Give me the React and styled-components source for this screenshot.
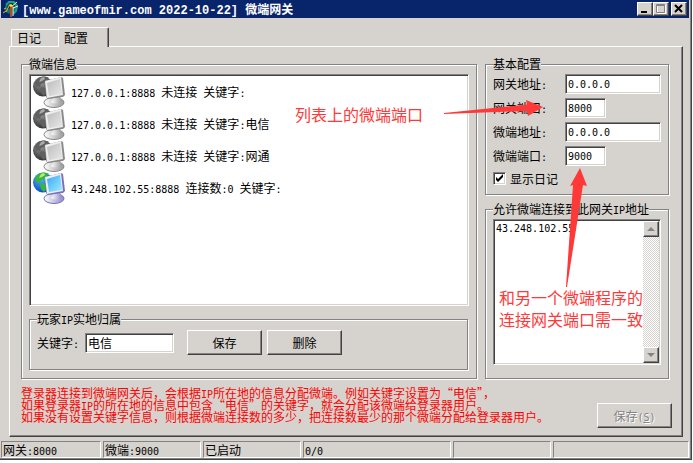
import React, { useState } from 'react'
import styled, { createGlobalStyle, css } from 'styled-components'

const GlobalStyle = createGlobalStyle`
*{
box-sizing:border-box;
}
body{
margin:0;
background:#fff;
color:#000;
font-family:"Noto Sans CJK SC",sans-serif;
font-size:12px;
line-height:12px;
}
button,input,textarea{
font:inherit;
color:inherit;
margin:0;
border-radius:0;
}
`

const sunken = css`
background:#fff;
border:1px solid;
border-color:#848284 #fff #fff #848284;
box-shadow:inset 1px 1px 0 #424142,inset -1px -1px 0 #d6d3ce;
`

const raised = css`
background:#d6d3ce;
border:1px solid;
border-color:#fff #424142 #424142 #fff;
box-shadow:inset -1px -1px 0 #848284;
`

const Window = styled.main`
position:relative;
margin-right:1px;
padding:0 1px 1px;
background:#d6d3ce;
border-right:1px solid #424142;
border-bottom:1px solid #424142;
box-shadow:inset -1px -1px 0 #848284;
`

const TitleBar = styled.header`
display:flex;
align-items:center;
height:18px;
margin-right:1px;
padding:0 2px;
background:#08246b;
`

const Title = styled.h1`
flex:1;
margin:0;
padding-left:3px;
color:#fff;
font-size:12px;
line-height:18px;
font-weight:700;
white-space:nowrap;
`

const CaptionButton = styled.button`
${raised}
display:flex;
width:16px;
height:14px;
padding:0;
margin-left:${({ $apart }) => ($apart ? '2px' : '0')};
`

const Latin = styled.span`
font-family:"DejaVu Sans Mono",monospace;
font-size:10px;
line-height:0;
`

const TitleLatin = styled.span`
font-family:"Liberation Mono",monospace;
line-height:0;
`

const Tabs = styled.nav`
display:flex;
align-items:flex-end;
height:28px;
padding-left:10px;
`

const Tab = styled.button`
height:${({ $active }) => ($active ? '20px' : '17px')};
width:${({ $active }) => ($active ? '51px' : '47px')};
margin-bottom:${({ $active }) => ($active ? '-1px' : '0')};
padding:0 0 0 5px;
text-align:left;
background:#d6d3ce;
border:1px solid #fff;
border-bottom:0;
border-right:${({ $active }) => ($active ? '1px solid #424142' : '0')};
box-shadow:${({ $active }) => ($active ? 'inset -1px 0 0 #848284' : 'none')};
border-radius:2px 2px 0 0;
position:relative;
z-index:${({ $active }) => ($active ? 1 : 0)};
`

const Page = styled.section`
margin:0 7px 0 8px;
padding:11px 10px 8px 11px;
border:1px solid;
border-color:#fff #424142 #424142 #fff;
box-shadow:inset -1px -1px 0 #848284;
`

const Columns = styled.div`
display:flex;
gap:7px;
padding-right:2px;
`

const Side = styled.div`
display:flex;
flex-direction:column;
gap:7px;
width:185px;
`

const Group = styled.fieldset`
flex:${({ $grow }) => ($grow ? '1' : 'none')};
min-width:0;
margin:0 1px 1px 0;
padding:4px 7px 7px;
border:1px solid #848284;
box-shadow:1px 1px 0 #fff,inset 1px 1px 0 #fff;
`

const Legend = styled.legend`
height:12px;
padding:0;
white-space:nowrap;
background:#d6d3ce;
`

const ServerList = styled.ul`
${sunken}
height:232px;
margin:0 0 7px;
padding:1px 3px;
list-style:none;
overflow:hidden;
`

const Server = styled.li`
display:flex;
align-items:center;
gap:6px;
height:32px;
svg{
    flex:none;
}
`

const KeywordRow = styled.div`
display:flex;
align-items:center;
gap:5px;
padding:1px 0 7px;
`

const Label = styled.label`
flex:none;
width:${({ $wide }) => ($wide ? '72px' : '43px')};
white-space:nowrap;
`

const TextBox = styled.input`
${sunken}
width:${({ $size }) => $size || '96px'};
height:20px;
padding:1px 2px;
margin-right:${({ $spaced }) => ($spaced ? '8px' : '0')};
font-family:${({ $latin }) => ($latin ? '"DejaVu Sans Mono",monospace' : 'inherit')};
font-size:${({ $latin }) => ($latin ? '10px' : '12px')};
`

const Button = styled.button`
${raised}
width:75px;
height:25px;
padding:0;
&:disabled{
    color:#848284;
    text-shadow:1px 1px 0 #fff;
}
`

const SettingRow = styled.div`
display:flex;
align-items:center;
margin-bottom:4px;
`

const CheckLabel = styled.label`
display:flex;
align-items:center;
gap:4px;
height:17px;
`

const CheckBox = styled.input`
${sunken}
appearance:none;
width:13px;
height:13px;
&:checked{
    background:#fff url("data:image/svg+xml,%3Csvg xmlns='http://www.w3.org/2000/svg' viewBox='0 0 11 11'%3E%3Cpath d='M2 4v3l2 2 5-5V1L4 6z'/%3E%3C/svg%3E") center/11px no-repeat;
}
`

const Memo = styled.div`
${sunken}
display:flex;
height:146px;
padding:1px;
`

const MemoText = styled.textarea`
flex:1;
min-width:0;
padding:2px 1px;
border:0;
resize:none;
outline:none;
overflow:hidden;
background:transparent;
font-family:"DejaVu Sans Mono",monospace;
font-size:10px;
`

const ScrollBar = styled.div`
display:flex;
flex-direction:column;
justify-content:space-between;
width:16px;
background:repeating-conic-gradient(#fff 0 25%,#d6d3ce 0 50%) 0 0/2px 2px;
`

const ScrollButton = styled.button`
${raised}
display:flex;
justify-content:center;
align-items:center;
width:16px;
height:16px;
padding:0;
`

const Footer = styled.div`
display:flex;
justify-content:space-between;
align-items:flex-end;
padding-top:7px;
`

const Notice = styled.p`
margin:0 0 5px;
color:#f00;
white-space:nowrap;
`

const StatusBar = styled.footer`
display:grid;
grid-template-columns:100px 98px 98px 148px 98px 1fr;
gap:2px;
margin:4px 1px 0 0;
`

const Status = styled.div`
height:17px;
padding:2px 1px;
border:1px solid;
border-color:#848284 #fff #fff #848284;
white-space:nowrap;
`

const Note = styled.div`
position:absolute;
z-index:2;
left:${({ $x }) => $x}px;
top:${({ $y }) => $y}px;
color:#ff3838;
font-size:16px;
line-height:22px;
white-space:nowrap;
pointer-events:none;
`

const Arrows = styled.svg`
position:absolute;
z-index:2;
left:440px;
top:95px;
pointer-events:none;
`

// Latin runs are set in a half-width face beside the full-width characters
const Mixed = ({ children, as: Run = Latin }) =>
  children.split(/([\x20-\x7e]+)/).map((part, i) =>
    i % 2 ? <Run key={i}>{part}</Run> : part
  )

const AppLogo = () => (
  <svg width="16" height="16" viewBox="0 0 16 16">
    <circle cx="8" cy="7" r="6" fill="#087878" />
    <path d="M3 4l3-3 5 0 3 4-1 5-3 3" fill="none" stroke="#18a098" strokeWidth="2" />
    <path d="M5 3l4-1 3 3-2 1v8H7V7L4 9z" fill="#102818" />
    <path d="M8 6l6-5M10 7l5-2" stroke="#fff0a0" strokeWidth="1" />
    <path d="M1 8l2-1M3 11l3-6M0 12l3-2" stroke="#f0b820" strokeWidth="1" />
    <path d="M8 5v11" stroke="#b84820" strokeWidth="2" />
    <path d="M10 6v9" stroke="#fff" strokeWidth="1" />
    <path d="M5 4l3-1 3 2-3 1z" fill="#f8d860" />
  </svg>
)

const ServerIcon = ({ online, id }) => {
  const globe = online ? ['#5ab0ff', '#0750c0'] : ['#999', '#333']
  const screen = online ? ['#38a8f8', '#a0ecff'] : ['#bbb', '#e8e8e8']
  const frame = online ? '#7870b8' : '#888'
  return (
    <svg width="32" height="32" viewBox="0 0 32 32">
      <defs>
        <radialGradient id={`globe${id}`} cx=".4" cy=".3" r=".7">
          <stop stopColor={globe[0]} />
          <stop offset="1" stopColor={globe[1]} />
        </radialGradient>
        <linearGradient id={`screen${id}`} x1="0" y1="0" x2="1" y2="1">
          <stop stopColor={screen[0]} />
          <stop offset="1" stopColor={screen[1]} />
        </linearGradient>
        <linearGradient id={`base${id}`}>
          <stop stopColor="#fff" />
          <stop offset="1" stopColor={online ? '#9088c8' : '#999'} />
        </linearGradient>
      </defs>
      <circle cx="10" cy="10.500" r="10" fill={`url(#globe${id})`} />
      <path
        d="M5 2c4-2 8-2 11 0l-3 2-2 3-3 1-1 3-4-1-1-4zM8 11l4 1 2 4-3 4-3-3-1-4z"
        fill={online ? '#38b838' : '#606060'}
      />
      <path d="M8 2l3-1 1 2-3 2-3 1z" fill={online ? '#b8ee78' : '#aaa'} />
      <ellipse cx="21" cy="26.500" rx="10" ry="5" fill={`url(#base${id})`} stroke={frame} strokeWidth="1" />
      <path d="M19 20l8-1c0 4 1 5 2 7-3 2-8 2-11 0 2-2 2-3 1-6z" fill={`url(#base${id})`} />
      <path d="M12 5l16-4 2 1 2 17-2 2-15 2-2-2z" fill={frame} />
      <path d="M12 5l16-4 2 18-16 3z" fill="#eee" />
      <path d="M14 7l13-4 2 15-13 2z" fill={`url(#screen${id})`} />
    </svg>
  )
}

const servers = [
  { text: '127.0.0.1:8888 未连接 关键字:' },
  { text: '127.0.0.1:8888 未连接 关键字:电信' },
  { text: '127.0.0.1:8888 未连接 关键字:网通' },
  { text: '43.248.102.55:8888 连接数:0 关键字:', online: true },
]

const settings = [
  { id: 'gateHost', label: '网关地址:', value: '0.0.0.0' },
  { id: 'gatePort', label: '网关端口:', value: '8000', size: '41px' },
  { id: 'microHost', label: '微端地址:', value: '0.0.0.0' },
  { id: 'microPort', label: '微端端口:', value: '9000', size: '41px' },
]

const statuses = ['网关:8000', '微端:9000', '已启动', '0/0', '', '']

const App = () => {
  const [tab, setTab] = useState('配置')

  return (
    <Window lang="zh-CN">
      <GlobalStyle />
      <TitleBar>
        <AppLogo />
        <Title><Mixed as={TitleLatin}>[www.gameofmir.com 2022-10-22] 微端网关</Mixed></Title>
        <CaptionButton aria-label="最小化">
          <svg width="14" height="12"><path d="M3 8h6v2H3z" /></svg>
        </CaptionButton>
        <CaptionButton aria-label="最大化" disabled>
          <svg width="14" height="12" fill="none">
            <path d="M3.500 2v8.500h8V2" stroke="#fff" />
            <path d="M2.500 1.500h8v8h-8zM2 2.500h9" stroke="#848284" />
          </svg>
        </CaptionButton>
        <CaptionButton aria-label="关闭" $apart>
          <svg width="14" height="12"><path d="M3 2l7 7M10 2L3 9" stroke="#000" strokeWidth="2" /></svg>
        </CaptionButton>
      </TitleBar>

      <Tabs>
        {['日记', '配置'].map((name) => (
          <Tab key={name} $active={tab === name} onClick={() => setTab(name)}>{name}</Tab>
        ))}
      </Tabs>

      <Page>
        <Columns>
          <Group $grow>
            <Legend>微端信息</Legend>
            <ServerList>
              {servers.map((server, i) => (
                <Server key={i}>
                  <ServerIcon id={i} online={server.online} />
                  <span><Mixed>{server.text}</Mixed></span>
                </Server>
              ))}
            </ServerList>
            <Group>
              <Legend><Mixed>玩家IP实地归属</Mixed></Legend>
              <KeywordRow>
                <Label htmlFor="keyword"><Mixed>关键字:</Mixed></Label>
                <TextBox id="keyword" $size="89px" $spaced defaultValue="电信" />
                <Button>保存</Button>
                <Button>删除</Button>
              </KeywordRow>
            </Group>
          </Group>

          <Side>
            <Group>
              <Legend>基本配置</Legend>
              {settings.map(({ id, label, value, size }) => (
                <SettingRow key={id}>
                  <Label htmlFor={id} $wide><Mixed>{label}</Mixed></Label>
                  <TextBox id={id} $size={size} $latin defaultValue={value} />
                </SettingRow>
              ))}
              <CheckLabel>
                <CheckBox type="checkbox" defaultChecked />
                显示日记
              </CheckLabel>
            </Group>
            <Group $grow>
              <Legend id="allowed"><Mixed>允许微端连接到此网关IP地址</Mixed></Legend>
              <Memo>
                <MemoText aria-labelledby="allowed" defaultValue="43.248.102.55" />
                <ScrollBar>
                  <ScrollButton aria-label="向上">
                    <svg width="8" height="4"><path d="M4 0l4 4H0z" fill="#848284" /></svg>
                  </ScrollButton>
                  <ScrollButton aria-label="向下">
                    <svg width="8" height="4"><path d="M0 0h8L4 4z" fill="#848284" /></svg>
                  </ScrollButton>
                </ScrollBar>
              </Memo>
            </Group>
          </Side>
        </Columns>

        <Footer>
          <Notice>
            登录器连接到微端网关后，会根据<Latin>IP</Latin>所在地的信息分配微端。例如关键字设置为“电信”，<br />
            如果登录器<Latin>IP</Latin>的所在地的信息中包含“电信”的关键字，就会分配该微端给登录器用户。<br />
            如果没有设置关键字信息，则根据微端连接数的多少，把连接数最少的那个微端分配给登录器用户。
          </Notice>
          <Button disabled>保存<Latin>(<u>S</u>)</Latin></Button>
        </Footer>
      </Page>

      <StatusBar>
        {statuses.map((status, i) => (
          <Status key={i}><Mixed>{status}</Mixed></Status>
        ))}
      </StatusBar>

      <Note $x={295} $y={103}>列表上的微端端口</Note>
      <Note $x={499} $y={286}>和另一个微端程序的<br />连接网关端口需一致</Note>
      <Arrows width="160" height="200" viewBox="440 95 160 200" fill="#ff3838">
        <path d="M444 113L527 104.500 526 100 543 107 528 116 527 111 444 114z" />
        <path d="M580 168L587 186 583 185 567 287 566 287 573 185 570 186z" />
      </Arrows>
    </Window>
  )
}

export default App
